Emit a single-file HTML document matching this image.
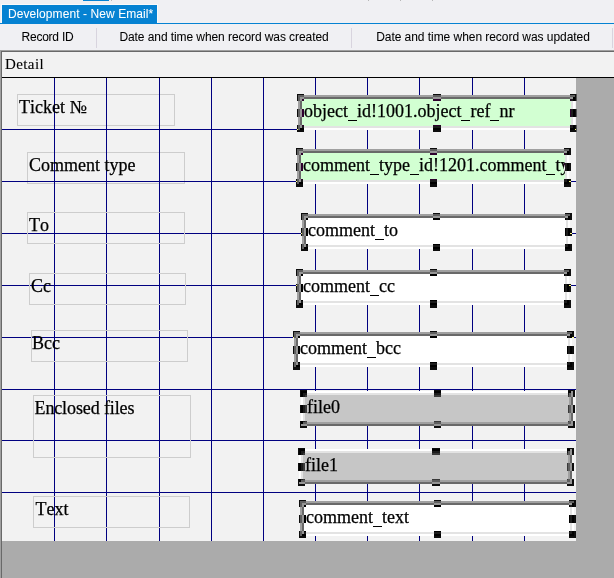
<!DOCTYPE html>
<html><head><meta charset="utf-8"><style>
html,body{margin:0;padding:0;font-kerning:none;}
body{width:614px;height:578px;position:relative;overflow:hidden;background:#f0f0f3;}
#root{position:absolute;left:0;top:0;width:614px;height:578px;background:#f0f0f3;isolation:isolate;}
#root div{position:absolute;}
.ser{font-family:"Liberation Serif",serif;color:#000;white-space:nowrap;font-variant-ligatures:none;}
.lab{font-size:18px;line-height:24px;}
.tb{position:absolute;font-size:18px;line-height:31px;}
.fill{overflow:hidden;}
.u{color:transparent;position:relative;-webkit-text-stroke:0;}
.u::after{content:"";position:absolute;left:0;right:0;bottom:0px;height:1px;background:#000;}
.ser{-webkit-text-stroke:0.25px #000;}
.tabt{font-family:"Liberation Sans",sans-serif;font-size:12px;line-height:17px;color:#fff;white-space:nowrap;letter-spacing:0.08px;-webkit-text-stroke:0.05px #fff;}
.hdr{font-family:"Liberation Sans",sans-serif;font-size:12px;line-height:17px;color:#000;top:29px;text-align:center;white-space:nowrap;-webkit-text-stroke:0.05px #000;}
</style></head><body><div id="root">
<div style="left:83px;top:0px;width:26px;height:1px;background:#0582d2"></div>
<div style="left:111px;top:0px;width:1px;height:1px;background:#b8b8b8"></div>
<div style="left:368px;top:0px;width:1px;height:1px;background:#b8b8b8"></div>
<div style="left:400px;top:0px;width:1px;height:1px;background:#b8b8b8"></div>
<div style="left:432px;top:0px;width:1px;height:1px;background:#b8b8b8"></div>
<div style="left:1px;top:4px;width:157px;height:19px;background:#fafafa"></div>
<div style="left:2px;top:5px;width:155px;height:19px;background:#0582d2"></div>
<div style="left:0px;top:23px;width:614px;height:1px;background:#0582d2"></div>
<div class="tabt" style="left:8px;top:6px">Development - New Email*</div>
<div style="left:96px;top:28px;width:1px;height:20px;background:#d8d4de"></div>
<div style="left:351px;top:28px;width:1px;height:20px;background:#d8d4de"></div>
<div style="left:612px;top:28px;width:1px;height:20px;background:#d8d4de"></div>
<div class="hdr" style="left:-1px;width:97px;letter-spacing:-0.25px">Record ID</div>
<div class="hdr" style="left:97px;width:254px;letter-spacing:-0.08px">Date and time when record was created</div>
<div class="hdr" style="left:353px;width:260px;letter-spacing:-0.05px">Date and time when record was updated</div>
<div style="left:2px;top:52px;width:612px;height:526px;background:#f2f2f2"></div>
<div style="left:0px;top:50px;width:614px;height:1px;background:#a0a0a0"></div>
<div style="left:1px;top:51px;width:613px;height:1px;background:#696969"></div>
<div style="left:0px;top:50px;width:1px;height:528px;background:#a0a0a0"></div>
<div style="left:1px;top:51px;width:1px;height:527px;background:#696969"></div>
<div class="ser" style="left:5px;top:56px;font-size:15px;line-height:17px;letter-spacing:0.4px;-webkit-text-stroke:0.1px #000">Detail</div>
<div style="left:2px;top:77px;width:612px;height:1px;background:#000"></div>
<div style="left:576px;top:78px;width:38px;height:500px;background:#ababab"></div>
<div style="left:2px;top:541px;width:574px;height:37px;background:#ababab"></div>
<div style="left:17px;top:94px;width:158px;height:32px;border:1px solid #cdcdcd;box-sizing:border-box"></div>
<div style="left:27px;top:152px;width:158px;height:32px;border:1px solid #cdcdcd;box-sizing:border-box"></div>
<div style="left:54px;top:78px;width:1px;height:463px;background:#000080"></div>
<div style="left:106px;top:78px;width:1px;height:463px;background:#000080"></div>
<div style="left:159px;top:78px;width:1px;height:463px;background:#000080"></div>
<div style="left:211px;top:78px;width:1px;height:463px;background:#000080"></div>
<div style="left:263px;top:78px;width:1px;height:463px;background:#000080"></div>
<div style="left:315px;top:78px;width:1px;height:463px;background:#000080"></div>
<div style="left:367px;top:78px;width:1px;height:463px;background:#000080"></div>
<div style="left:419px;top:78px;width:1px;height:463px;background:#000080"></div>
<div style="left:472px;top:78px;width:1px;height:463px;background:#000080"></div>
<div style="left:524px;top:78px;width:1px;height:463px;background:#000080"></div>
<div style="left:2px;top:129px;width:574px;height:1px;background:#000080"></div>
<div style="left:2px;top:181px;width:574px;height:1px;background:#000080"></div>
<div style="left:2px;top:233px;width:574px;height:1px;background:#000080"></div>
<div style="left:2px;top:285px;width:574px;height:1px;background:#000080"></div>
<div style="left:2px;top:337px;width:574px;height:1px;background:#000080"></div>
<div style="left:2px;top:389px;width:574px;height:1px;background:#000080"></div>
<div style="left:2px;top:440px;width:574px;height:1px;background:#000080"></div>
<div style="left:2px;top:492px;width:574px;height:1px;background:#000080"></div>
<div style="left:27px;top:212px;width:158px;height:32px;border:1px solid #cdcdcd;box-sizing:border-box"></div>
<div style="left:29px;top:273px;width:157px;height:32px;border:1px solid #cdcdcd;box-sizing:border-box"></div>
<div style="left:31px;top:330px;width:157px;height:32px;border:1px solid #cdcdcd;box-sizing:border-box"></div>
<div style="left:33px;top:395px;width:158px;height:63px;border:1px solid #cdcdcd;box-sizing:border-box"></div>
<div style="left:33px;top:496px;width:157px;height:32px;border:1px solid #cdcdcd;box-sizing:border-box"></div>
<div class="ser lab" style="left:19px;top:95px;letter-spacing:0px">Ticket &#8470;</div>
<div class="ser lab" style="left:29px;top:153px;letter-spacing:0px">Comment type</div>
<div class="ser lab" style="left:29px;top:213px;letter-spacing:0px">To</div>
<div class="ser lab" style="left:31px;top:274px;letter-spacing:0px">Cc</div>
<div class="ser lab" style="left:32px;top:331px;letter-spacing:0px">Bcc</div>
<div class="ser lab" style="left:34.5px;top:396px;letter-spacing:-0.12px">Enclosed files</div>
<div class="ser lab" style="left:35.5px;top:497px;letter-spacing:0px">Text</div>
<div style="left:298px;top:128px;width:277px;height:2px;background:#ffffff"></div>
<div style="left:573px;top:95px;width:2px;height:35px;background:#ffffff"></div>
<div style="left:298px;top:95px;width:277px;height:2px;background:#a0a0a0"></div>
<div style="left:298px;top:95px;width:2px;height:35px;background:#a0a0a0"></div>
<div style="left:300px;top:126px;width:273px;height:2px;background:#e3e3e3"></div>
<div style="left:571px;top:97px;width:2px;height:31px;background:#e3e3e3"></div>
<div style="left:300px;top:97px;width:273px;height:2px;background:#696969"></div>
<div style="left:300px;top:97px;width:2px;height:31px;background:#696969"></div>
<div class="fill" style="left:302px;top:99px;width:269px;height:27px;background:#d2ffd2"><span class="ser tb" style="left:2px;top:-3px">object<span class=u>_</span>id!1001.object<span class=u>_</span>ref<span class=u>_</span>nr</span></div>
<div style="left:297px;top:182px;width:272px;height:2px;background:#ffffff"></div>
<div style="left:567px;top:149px;width:2px;height:35px;background:#ffffff"></div>
<div style="left:297px;top:149px;width:272px;height:2px;background:#a0a0a0"></div>
<div style="left:297px;top:149px;width:2px;height:35px;background:#a0a0a0"></div>
<div style="left:299px;top:180px;width:268px;height:2px;background:#e3e3e3"></div>
<div style="left:565px;top:151px;width:2px;height:31px;background:#e3e3e3"></div>
<div style="left:299px;top:151px;width:268px;height:2px;background:#696969"></div>
<div style="left:299px;top:151px;width:2px;height:31px;background:#696969"></div>
<div class="fill" style="left:301px;top:153px;width:264px;height:27px;background:#d2ffd2"><span class="ser tb" style="left:2px;top:-3px">comment<span class=u>_</span>type<span class=u>_</span>id!1201.comment<span class=u>_</span>type<span class=u>_</span>name</span></div>
<div style="left:302px;top:247px;width:268px;height:2px;background:#ffffff"></div>
<div style="left:568px;top:214px;width:2px;height:35px;background:#ffffff"></div>
<div style="left:302px;top:214px;width:268px;height:2px;background:#a0a0a0"></div>
<div style="left:302px;top:214px;width:2px;height:35px;background:#a0a0a0"></div>
<div style="left:304px;top:245px;width:264px;height:2px;background:#e3e3e3"></div>
<div style="left:566px;top:216px;width:2px;height:31px;background:#e3e3e3"></div>
<div style="left:304px;top:216px;width:264px;height:2px;background:#696969"></div>
<div style="left:304px;top:216px;width:2px;height:31px;background:#696969"></div>
<div class="fill" style="left:306px;top:218px;width:260px;height:27px;background:#ffffff"><span class="ser tb" style="left:2px;top:-3px">comment<span class=u>_</span>to</span></div>
<div style="left:297px;top:303px;width:272px;height:2px;background:#ffffff"></div>
<div style="left:567px;top:270px;width:2px;height:35px;background:#ffffff"></div>
<div style="left:297px;top:270px;width:272px;height:2px;background:#a0a0a0"></div>
<div style="left:297px;top:270px;width:2px;height:35px;background:#a0a0a0"></div>
<div style="left:299px;top:301px;width:268px;height:2px;background:#e3e3e3"></div>
<div style="left:565px;top:272px;width:2px;height:31px;background:#e3e3e3"></div>
<div style="left:299px;top:272px;width:268px;height:2px;background:#696969"></div>
<div style="left:299px;top:272px;width:2px;height:31px;background:#696969"></div>
<div class="fill" style="left:301px;top:274px;width:264px;height:27px;background:#ffffff"><span class="ser tb" style="left:2px;top:-3px">comment<span class=u>_</span>cc</span></div>
<div style="left:294px;top:365px;width:278px;height:2px;background:#ffffff"></div>
<div style="left:570px;top:332px;width:2px;height:35px;background:#ffffff"></div>
<div style="left:294px;top:332px;width:278px;height:2px;background:#a0a0a0"></div>
<div style="left:294px;top:332px;width:2px;height:35px;background:#a0a0a0"></div>
<div style="left:296px;top:363px;width:274px;height:2px;background:#e3e3e3"></div>
<div style="left:568px;top:334px;width:2px;height:31px;background:#e3e3e3"></div>
<div style="left:296px;top:334px;width:274px;height:2px;background:#696969"></div>
<div style="left:296px;top:334px;width:2px;height:31px;background:#696969"></div>
<div class="fill" style="left:298px;top:336px;width:270px;height:27px;background:#ffffff"><span class="ser tb" style="left:2px;top:-3px">comment<span class=u>_</span>bcc</span></div>
<div style="left:301px;top:391px;width:272px;height:2px;background:#ffffff"></div>
<div style="left:301px;top:391px;width:2px;height:35px;background:#ffffff"></div>
<div style="left:301px;top:424px;width:272px;height:2px;background:#696969"></div>
<div style="left:571px;top:391px;width:2px;height:35px;background:#696969"></div>
<div style="left:303px;top:393px;width:268px;height:2px;background:#e3e3e3"></div>
<div style="left:303px;top:393px;width:2px;height:31px;background:#e3e3e3"></div>
<div style="left:303px;top:422px;width:268px;height:2px;background:#a0a0a0"></div>
<div style="left:569px;top:393px;width:2px;height:31px;background:#a0a0a0"></div>
<div class="fill" style="left:305px;top:395px;width:264px;height:27px;background:#c6c6c6"><span class="ser tb" style="left:2px;top:-3px">file0</span></div>
<div style="left:299px;top:449px;width:273px;height:2px;background:#ffffff"></div>
<div style="left:299px;top:449px;width:2px;height:35px;background:#ffffff"></div>
<div style="left:299px;top:482px;width:273px;height:2px;background:#696969"></div>
<div style="left:570px;top:449px;width:2px;height:35px;background:#696969"></div>
<div style="left:301px;top:451px;width:269px;height:2px;background:#e3e3e3"></div>
<div style="left:301px;top:451px;width:2px;height:31px;background:#e3e3e3"></div>
<div style="left:301px;top:480px;width:269px;height:2px;background:#a0a0a0"></div>
<div style="left:568px;top:451px;width:2px;height:31px;background:#a0a0a0"></div>
<div class="fill" style="left:303px;top:453px;width:265px;height:27px;background:#c6c6c6"><span class="ser tb" style="left:2px;top:-3px">file1</span></div>
<div style="left:300px;top:534px;width:274px;height:2px;background:#ffffff"></div>
<div style="left:572px;top:501px;width:2px;height:35px;background:#ffffff"></div>
<div style="left:300px;top:501px;width:274px;height:2px;background:#a0a0a0"></div>
<div style="left:300px;top:501px;width:2px;height:35px;background:#a0a0a0"></div>
<div style="left:302px;top:532px;width:270px;height:2px;background:#e3e3e3"></div>
<div style="left:570px;top:503px;width:2px;height:31px;background:#e3e3e3"></div>
<div style="left:302px;top:503px;width:270px;height:2px;background:#696969"></div>
<div style="left:302px;top:503px;width:2px;height:31px;background:#696969"></div>
<div class="fill" style="left:304px;top:505px;width:266px;height:27px;background:#ffffff"><span class="ser tb" style="left:2px;top:-3px">comment<span class=u>_</span>text</span></div>
<div style="left:297px;top:94px;width:7px;height:7px;background:#fff;mix-blend-mode:difference"></div>
<div style="left:297px;top:109px;width:7px;height:8px;background:#fff;mix-blend-mode:difference"></div>
<div style="left:297px;top:125px;width:7px;height:7px;background:#fff;mix-blend-mode:difference"></div>
<div style="left:433px;top:94px;width:8px;height:7px;background:#fff;mix-blend-mode:difference"></div>
<div style="left:433px;top:125px;width:8px;height:7px;background:#fff;mix-blend-mode:difference"></div>
<div style="left:570px;top:94px;width:7px;height:7px;background:#fff;mix-blend-mode:difference"></div>
<div style="left:570px;top:109px;width:7px;height:8px;background:#fff;mix-blend-mode:difference"></div>
<div style="left:570px;top:125px;width:7px;height:7px;background:#fff;mix-blend-mode:difference"></div>
<div style="left:296px;top:148px;width:7px;height:7px;background:#fff;mix-blend-mode:difference"></div>
<div style="left:296px;top:163px;width:7px;height:8px;background:#fff;mix-blend-mode:difference"></div>
<div style="left:296px;top:179px;width:7px;height:8px;background:#fff;mix-blend-mode:difference"></div>
<div style="left:430px;top:148px;width:7px;height:7px;background:#fff;mix-blend-mode:difference"></div>
<div style="left:430px;top:179px;width:7px;height:8px;background:#fff;mix-blend-mode:difference"></div>
<div style="left:564px;top:148px;width:7px;height:7px;background:#fff;mix-blend-mode:difference"></div>
<div style="left:564px;top:163px;width:7px;height:8px;background:#fff;mix-blend-mode:difference"></div>
<div style="left:564px;top:179px;width:7px;height:8px;background:#fff;mix-blend-mode:difference"></div>
<div style="left:301px;top:213px;width:7px;height:7px;background:#fff;mix-blend-mode:difference"></div>
<div style="left:301px;top:228px;width:7px;height:8px;background:#fff;mix-blend-mode:difference"></div>
<div style="left:301px;top:244px;width:7px;height:7px;background:#fff;mix-blend-mode:difference"></div>
<div style="left:433px;top:213px;width:7px;height:7px;background:#fff;mix-blend-mode:difference"></div>
<div style="left:433px;top:244px;width:7px;height:7px;background:#fff;mix-blend-mode:difference"></div>
<div style="left:565px;top:213px;width:7px;height:7px;background:#fff;mix-blend-mode:difference"></div>
<div style="left:565px;top:228px;width:7px;height:8px;background:#fff;mix-blend-mode:difference"></div>
<div style="left:565px;top:244px;width:7px;height:7px;background:#fff;mix-blend-mode:difference"></div>
<div style="left:296px;top:269px;width:7px;height:7px;background:#fff;mix-blend-mode:difference"></div>
<div style="left:296px;top:284px;width:7px;height:8px;background:#fff;mix-blend-mode:difference"></div>
<div style="left:296px;top:300px;width:7px;height:8px;background:#fff;mix-blend-mode:difference"></div>
<div style="left:430px;top:269px;width:7px;height:7px;background:#fff;mix-blend-mode:difference"></div>
<div style="left:430px;top:300px;width:7px;height:8px;background:#fff;mix-blend-mode:difference"></div>
<div style="left:564px;top:269px;width:7px;height:7px;background:#fff;mix-blend-mode:difference"></div>
<div style="left:564px;top:284px;width:7px;height:8px;background:#fff;mix-blend-mode:difference"></div>
<div style="left:564px;top:300px;width:7px;height:8px;background:#fff;mix-blend-mode:difference"></div>
<div style="left:293px;top:331px;width:7px;height:7px;background:#fff;mix-blend-mode:difference"></div>
<div style="left:293px;top:346px;width:7px;height:8px;background:#fff;mix-blend-mode:difference"></div>
<div style="left:293px;top:362px;width:7px;height:8px;background:#fff;mix-blend-mode:difference"></div>
<div style="left:430px;top:331px;width:7px;height:7px;background:#fff;mix-blend-mode:difference"></div>
<div style="left:430px;top:362px;width:7px;height:8px;background:#fff;mix-blend-mode:difference"></div>
<div style="left:567px;top:331px;width:7px;height:7px;background:#fff;mix-blend-mode:difference"></div>
<div style="left:567px;top:346px;width:7px;height:8px;background:#fff;mix-blend-mode:difference"></div>
<div style="left:567px;top:362px;width:7px;height:8px;background:#fff;mix-blend-mode:difference"></div>
<div style="left:300px;top:390px;width:7px;height:7px;background:#fff;mix-blend-mode:difference"></div>
<div style="left:300px;top:405px;width:7px;height:8px;background:#fff;mix-blend-mode:difference"></div>
<div style="left:300px;top:421px;width:7px;height:7px;background:#fff;mix-blend-mode:difference"></div>
<div style="left:434px;top:390px;width:7px;height:7px;background:#fff;mix-blend-mode:difference"></div>
<div style="left:434px;top:421px;width:7px;height:7px;background:#fff;mix-blend-mode:difference"></div>
<div style="left:568px;top:390px;width:7px;height:7px;background:#fff;mix-blend-mode:difference"></div>
<div style="left:568px;top:405px;width:7px;height:8px;background:#fff;mix-blend-mode:difference"></div>
<div style="left:568px;top:421px;width:7px;height:7px;background:#fff;mix-blend-mode:difference"></div>
<div style="left:298px;top:448px;width:7px;height:7px;background:#fff;mix-blend-mode:difference"></div>
<div style="left:298px;top:463px;width:7px;height:8px;background:#fff;mix-blend-mode:difference"></div>
<div style="left:298px;top:479px;width:7px;height:7px;background:#fff;mix-blend-mode:difference"></div>
<div style="left:432px;top:448px;width:8px;height:7px;background:#fff;mix-blend-mode:difference"></div>
<div style="left:432px;top:479px;width:8px;height:7px;background:#fff;mix-blend-mode:difference"></div>
<div style="left:567px;top:448px;width:7px;height:7px;background:#fff;mix-blend-mode:difference"></div>
<div style="left:567px;top:463px;width:7px;height:8px;background:#fff;mix-blend-mode:difference"></div>
<div style="left:567px;top:479px;width:7px;height:7px;background:#fff;mix-blend-mode:difference"></div>
<div style="left:299px;top:500px;width:7px;height:7px;background:#fff;mix-blend-mode:difference"></div>
<div style="left:299px;top:515px;width:7px;height:8px;background:#fff;mix-blend-mode:difference"></div>
<div style="left:299px;top:531px;width:7px;height:7px;background:#fff;mix-blend-mode:difference"></div>
<div style="left:434px;top:500px;width:7px;height:7px;background:#fff;mix-blend-mode:difference"></div>
<div style="left:434px;top:531px;width:7px;height:7px;background:#fff;mix-blend-mode:difference"></div>
<div style="left:569px;top:500px;width:7px;height:7px;background:#fff;mix-blend-mode:difference"></div>
<div style="left:569px;top:515px;width:7px;height:8px;background:#fff;mix-blend-mode:difference"></div>
<div style="left:569px;top:531px;width:7px;height:7px;background:#fff;mix-blend-mode:difference"></div>
</div></body></html>
